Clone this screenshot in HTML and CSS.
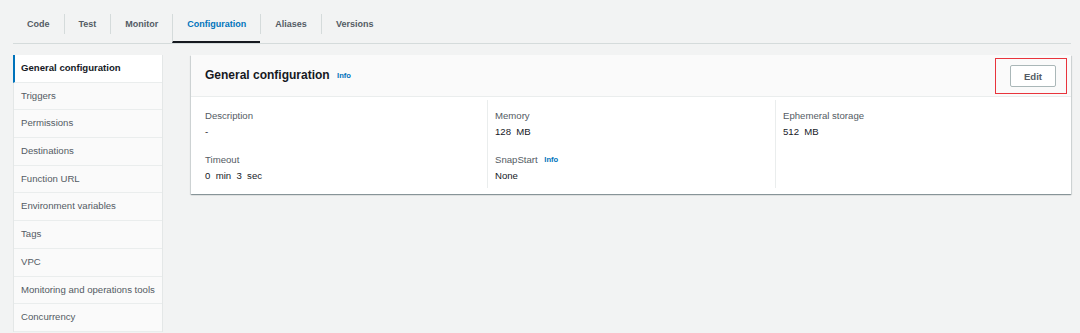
FILE: index.html
```html
<!DOCTYPE html>
<html lang="en">
<head>
    <meta charset="UTF-8">
    <title>Lambda - Configuration</title>
    <link rel="stylesheet" href="styles.css">
</head>
<body>

    <!-- Tabs -->
    <div class="tabs">
        <div class="tab">Code</div>
        <div class="tab">Test</div>
        <div class="tab">Monitor</div>
        <div class="tab active">Configuration</div>
        <div class="tab">Aliases</div>
        <div class="tab">Versions</div>
    </div>

    <div class="page">
        <!-- Side navigation -->
        <div class="side-nav">
            <div class="nav-item active">General configuration</div>
            <div class="nav-item">Triggers</div>
            <div class="nav-item">Permissions</div>
            <div class="nav-item">Destinations</div>
            <div class="nav-item">Function URL</div>
            <div class="nav-item">Environment variables</div>
            <div class="nav-item">Tags</div>
            <div class="nav-item">VPC</div>
            <div class="nav-item">Monitoring and operations tools</div>
            <div class="nav-item">Concurrency</div>
        </div>

        <!-- Main card -->
        <div class="card">
            <div class="card-header">
                <h2>General configuration <span class="info">Info</span></h2>
                <div class="edit-box">
                    <button class="button">Edit</button>
                </div>
            </div>
            <div class="card-body">
                <div class="col">
                    <div class="field">
                        <div class="label">Description</div>
                        <div class="value">-</div>
                    </div>
                    <div class="field">
                        <div class="label">Timeout</div>
                        <div class="value">0&nbsp; min&nbsp; 3&nbsp; sec</div>
                    </div>
                </div>
                <div class="col">
                    <div class="field">
                        <div class="label">Memory</div>
                        <div class="value">128&nbsp; MB</div>
                    </div>
                    <div class="field">
                        <div class="label">SnapStart <span class="info">Info</span></div>
                        <div class="value">None</div>
                    </div>
                </div>
                <div class="col">
                    <div class="field">
                        <div class="label">Ephemeral storage</div>
                        <div class="value">512&nbsp; MB</div>
                    </div>
                </div>
            </div>
        </div>
    </div>

</body>
</html>
```

FILE: styles.css
```css
/* General */
* {
    margin: 0;
    padding: 0;
    box-sizing: border-box;
    font-family: "Liberation Sans", Arial, sans-serif;
}

body {
    background-color: #f2f3f3;
    color: #16191f;
    font-size: 9.6px;
}

/* Tabs */
.tabs {
    display: flex;
    margin: 0 9px 0 13px;
    padding-top: 14px;
    border-bottom: 1px solid #d5dbdb;
}

.tab {
    padding: 0 14px;
    height: 29px;
    line-height: 20px;
    font-size: 9px;
    font-weight: bold;
    color: #545b64;
}

.tab + .tab {
    border-left: 1px solid #d5dbdb;
    height: 20px;
}

.tab.active {
    color: #0073bb;
    height: 29px;
    border-bottom: 2px solid #16191f;
}

/* Layout */
.page {
    display: flex;
    align-items: flex-start;
    gap: 28px;
    margin: 11px 9px 0 13px;
}

/* Side navigation */
.side-nav {
    width: 150px;
    flex-shrink: 0;
    border-left: 1px solid #e4e7e7;
    border-right: 1px solid #e4e7e7;
}

.nav-item {
    height: 27.7px;
    line-height: 26px;
    padding-left: 7px;
    background-color: #fafafa;
    border-bottom: 1px solid #eaeded;
    color: #545b64;
    white-space: nowrap;
}

.nav-item.active {
    background-color: #ffffff;
    border-left: 2px solid #0073bb;
    margin-left: -1px;
    padding-left: 6px;
    font-weight: bold;
    color: #16191f;
}

/* Card */
.card {
    flex: 1;
    background: #ffffff;
    box-shadow: 0 1px 1px rgba(0, 28, 36, 0.3), 1px 1px 1px rgba(0, 28, 36, 0.1), -1px 1px 1px rgba(0, 28, 36, 0.1);
}

.card-header {
    display: flex;
    align-items: center;
    justify-content: space-between;
    height: 42px;
    padding: 0 3px 0 14px;
    background: #fafafa;
    border-bottom: 1px solid #eaeded;
}

.card-header h2 {
    font-size: 12px;
    font-weight: bold;
    color: #16191f;
    margin-top: -1px;
}

.info {
    font-size: 7.6px;
    font-weight: bold;
    color: #0073bb;
    margin-left: 4px;
    vertical-align: 1px;
}

.edit-box {
    border: 1.5px solid #e8343c;
    padding: 6px 10px 6px 14px;
    margin-top: 1px;
    margin-right: 1px;
}

.button {
    width: 46px;
    height: 22px;
    background: #ffffff;
    border: 1px solid #aab7b8;
    border-radius: 2px;
    font-size: 9.6px;
    font-weight: bold;
    color: #545b64;
}

.card-body {
    display: grid;
    grid-template-columns: 282px 288px 282px;
    padding: 3px 14px 6px;
}

.col {
    padding: 8px 0 4px;
}

.col + .col {
    border-left: 1px solid #eaeded;
    padding-left: 7px;
}

.field + .field {
    margin-top: 12px;
}

.label {
    color: #545b64;
    line-height: 16px;
}

.value {
    line-height: 16px;
    color: #16191f;
}
```
